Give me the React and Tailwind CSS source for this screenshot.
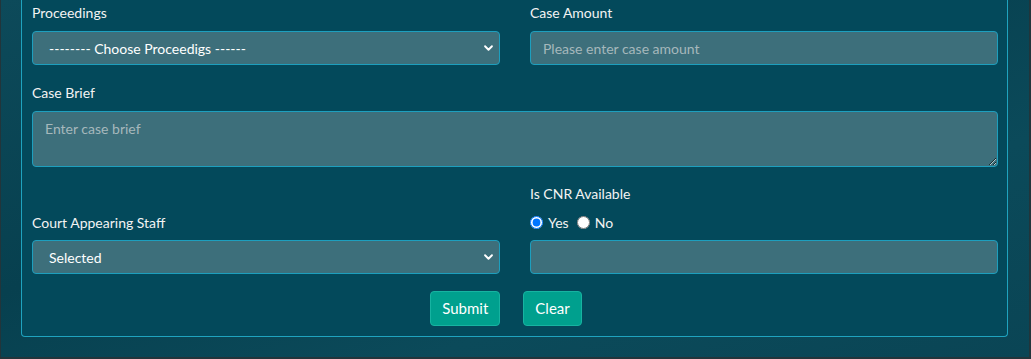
import { useState } from "react";

// small chevron used on the selects
function Chevron() {
  return (
    <svg width="11" height="11" viewBox="0 0 16 16" className="pointer-events-none absolute right-[6px] top-1/2 -translate-y-1/2">
      <path d="M3 5.5l5 5 5-5" fill="none" stroke="#ffffff" strokeWidth="2.8" strokeLinecap="round" strokeLinejoin="round" />
    </svg>
  );
}

const field =
  "w-full h-[34px] rounded-[4px] border border-[#1d9fbe] bg-[#3d6f7b] text-[14px] text-white outline-none placeholder:text-[#a6b8bc]";

export default function App() {
  const [cnr, setCnr] = useState("yes");

  return (
    <div
      className="h-[359px] w-full overflow-hidden border-l border-r-2 border-b-2 border-[#22353b] bg-[#0b4757] bg-[linear-gradient(160deg,#0d4a5a_0%,#07404f_40%,#0b4a5a_70%,#0a4555_100%)]"
      style={{ fontFamily: "Lato, 'Noto Sans', sans-serif" }}
    >
      <div className="ml-[20px] mr-[21px] rounded-b-[4px] border-x border-b border-[#1fa3bf] bg-[#03495b] pl-[10px] pr-[9px] pt-[2px] pb-[10px] text-[14px] text-[#f3f3f3]">
        {/* row 1 */}
        <div className="grid grid-cols-2 gap-x-[30px]">
          <div>
            <label className="mb-[8px] block leading-[21px]">Proceedings</label>
            <div className="relative">
              <select className={field + " appearance-none pl-[16px]"} defaultValue="">
                <option value="">-------- Choose Proceedigs ------</option>
              </select>
              <Chevron />
            </div>
          </div>
          <div>
            <label className="mb-[8px] block leading-[21px]">Case Amount</label>
            <input className={field + " px-[12px]"} placeholder="Please enter case amount" />
          </div>
        </div>

        {/* row 2 */}
        <div className="mt-[17px]">
          <label className="mb-[8px] block leading-[21px]">Case Brief</label>
          <textarea
            className="block h-[56px] w-full rounded-[4px] border border-[#1d9fbe] bg-[#3d6f7b] px-[12px] py-[6px] text-[14px] text-white outline-none placeholder:text-[#a6b8bc]"
            placeholder="Enter case brief"
          />
        </div>

        {/* row 3 */}
        <div className="mt-[17px] grid grid-cols-2 items-end gap-x-[30px]">
          <div>
            <label className="mb-[7px] block leading-[21px]">Court Appearing Staff</label>
            <div className="relative">
              <select className={field + " appearance-none pl-[16px]"} defaultValue="s">
                <option value="s">Selected</option>
              </select>
              <Chevron />
            </div>
          </div>
          <div>
            <label className="mb-[8px] block leading-[20px]">Is CNR Available</label>
            <div className="mb-[7px] flex h-[21px] items-center">
              <input
                type="radio"
                name="cnr"
                className="m-0 h-[13px] w-[13px]"
                checked={cnr === "yes"}
                onChange={() => setCnr("yes")}
              />
              <span className="ml-[5px] mr-[8px]">Yes</span>
              <input
                type="radio"
                name="cnr"
                className="m-0 h-[13px] w-[13px]"
                checked={cnr === "no"}
                onChange={() => setCnr("no")}
              />
              <span className="ml-[5px]">No</span>
            </div>
            <input className={field + " px-[12px]"} />
          </div>
        </div>

        {/* buttons */}
        <div className="mt-[17px] flex justify-center gap-[23px] pr-[18px]">
          <button className="h-[35px] rounded-[4px] border border-[#17b3a1] bg-[#00a08e] px-[11px] text-[15px] text-white">
            Submit
          </button>
          <button className="h-[35px] rounded-[4px] border border-[#17b3a1] bg-[#00a08e] px-[11px] text-[15px] text-white">
            Clear
          </button>
        </div>
      </div>
    </div>
  );
}
